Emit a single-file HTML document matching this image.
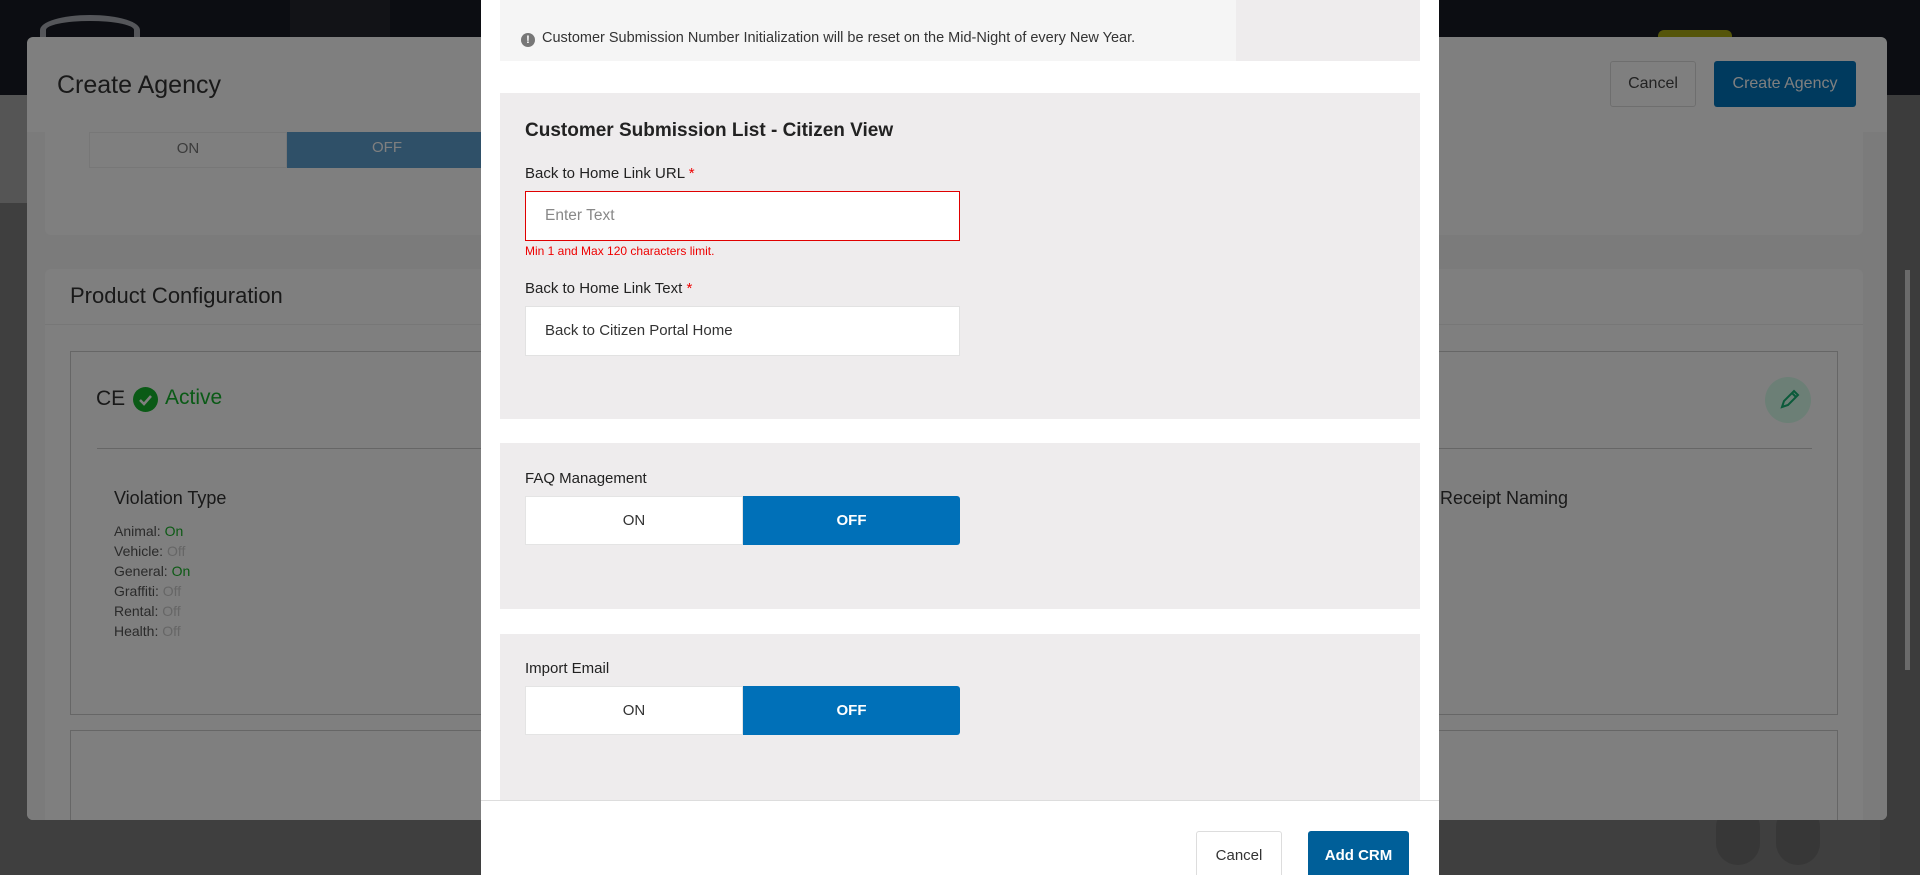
<!DOCTYPE html>
<html><head><meta charset="utf-8"><style>
*{box-sizing:border-box;margin:0;padding:0}
html,body{width:1920px;height:875px;overflow:hidden;background:#7e7e7e}
body{position:relative;font-family:"Liberation Sans",sans-serif;}
.a{position:absolute}
.t{position:absolute;white-space:nowrap}
</style></head><body>
<!-- background page (light, then overlaid) -->
<div class="a" style="left:0;top:0;width:1920px;height:95px;background:#181a24"></div>
<div class="a" style="left:290px;top:0;width:100px;height:95px;background:#24262e"></div>
<div class="a" style="left:0;top:95px;width:1920px;height:108px;background:#aaa"></div>
<div class="a" style="left:1658px;top:30px;width:74px;height:10px;background:#aaaa14;border-radius:6px 6px 0 0"></div>
<div class="a" style="left:40px;top:15px;width:100px;height:30px;border:6px solid #aaacb4;border-radius:50% 50% 0 0;border-bottom:none"></div>
<div class="a" style="left:1880px;top:95px;width:40px;height:780px;background:#787878"></div>
<div class="a" style="left:1905px;top:270px;width:5px;height:400px;background:#d6d6d6"></div>
<div class="a" style="left:1716px;top:805px;width:44px;height:60px;border-radius:22px;background:#6e6e6e"></div>
<div class="a" style="left:1776px;top:805px;width:44px;height:60px;border-radius:22px;background:#6e6e6e"></div>
<!-- create agency dialog -->
<div class="a" style="left:27px;top:37px;width:1860px;height:783px;background:#fff;border-radius:6px;overflow:hidden">
  <div class="a" style="left:0;top:95px;width:1860px;height:700px;background:#f6f6f6"></div>
  <div class="t" style="left:30px;top:34px;font-size:25px;color:#333">Create Agency</div>
  <div class="a" style="left:1583px;top:24px;width:86px;height:46px;border:1px solid #ddd;border-radius:3px;color:#444;font-size:16px;text-align:center;line-height:44px">Cancel</div>
  <div class="a" style="left:1687px;top:24px;width:142px;height:46px;background:#0074bc;border-radius:3px;color:#fff;font-size:16px;text-align:center;line-height:46px">Create Agency</div>
  <div class="a" style="left:18px;top:95px;width:1818px;height:103px;background:#fff;border-radius:0 0 6px 6px"></div>
  <div class="a" style="left:62px;top:95px;width:198px;height:36px;border:1px solid #eee;background:#fff;color:#777;font-size:15px;text-align:center;line-height:32px">ON</div>
  <div class="a" style="left:260px;top:95px;width:200px;height:36px;background:#5ea0d0;color:#fff;font-size:15px;text-align:center;line-height:32px">OFF</div>
  <div class="a" style="left:18px;top:232px;width:1818px;height:560px;background:#fff;border-radius:6px 6px 0 0"></div>
  <div class="a" style="left:18px;top:287px;width:1818px;height:1px;background:#eee"></div>
  <div class="t" style="left:43px;top:246px;font-size:22px;color:#333">Product Configuration</div>
  <div class="a" style="left:43px;top:314px;width:1768px;height:364px;border:1px solid #ccc"></div>
  <div class="t" style="left:69px;top:350px;font-size:21px;color:#333">CE</div>
  <div class="a" style="left:106px;top:350px;width:25px;height:25px;border-radius:50%;background:#15b42c"></div>
  <svg class="a" style="left:106px;top:350px" width="25" height="25"><path d="M7 13l4 4 7-8" stroke="#fff" stroke-width="2.5" fill="none"/></svg>
  <div class="t" style="left:138px;top:349px;font-size:21px;color:#15b42c">Active</div>
  <div class="a" style="left:70px;top:411px;width:1715px;height:1px;background:#ccc"></div>
  <div class="t" style="left:87px;top:451px;font-size:18px;color:#333">Violation Type</div>
  <div class="t" style="left:1413px;top:451px;font-size:18px;color:#333">Receipt Naming</div>
  <div class="t" style="left:87px;top:484px;font-size:14px;line-height:20px;color:#555">Animal: <span style="color:#1ab42a">On</span><br>Vehicle: <span style="color:#ccc">Off</span><br>General: <span style="color:#1ab42a">On</span><br>Graffiti: <span style="color:#ccc">Off</span><br>Rental: <span style="color:#ccc">Off</span><br>Health: <span style="color:#ccc">Off</span></div>
  <div class="a" style="left:1738px;top:340px;width:46px;height:46px;border-radius:50%;background:#d8ffec"></div>
  <svg class="a" style="left:1738px;top:340px" width="46" height="46"><path d="M17 30l2-6 10-10 4 4-10 10z M27 16l4 4" stroke="#16b474" stroke-width="2" fill="none"/></svg>
  <div class="a" style="left:43px;top:693px;width:1768px;height:100px;border:1px solid #ccc"></div>
</div>
<!-- overlay -->
<div class="a" style="left:0;top:0;width:1920px;height:875px;background:rgba(0,0,0,0.5)"></div>
<!-- CRM modal -->
<div class="a" style="left:481px;top:0;width:958px;height:875px;background:#fff">
  <div class="a" style="left:19px;top:0;width:736px;height:61px;background:#f5f5f5"></div>
  <div class="a" style="left:755px;top:0;width:184px;height:61px;background:#eeeced"></div>
  <div class="a" style="left:40px;top:33px;width:14px;height:14px;border-radius:50%;background:#777;color:#fff;font-size:11px;font-weight:bold;text-align:center;line-height:14px">!</div>
  <div class="t" style="left:61px;top:30px;font-size:14.5px;color:#333">Customer Submission Number Initialization will be reset on the Mid-Night of every New Year.</div>

  <div class="a" style="left:19px;top:93px;width:920px;height:326px;background:#eeeced"></div>
  <div class="t" style="left:44px;top:120px;font-size:19px;font-weight:bold;color:#222">Customer Submission List - Citizen View</div>
  <div class="t" style="left:44px;top:165px;font-size:15px;color:#222">Back to Home Link URL <span style="color:#e00">*</span></div>
  <div class="a" style="left:44px;top:191px;width:435px;height:50px;background:#fff;border:1.5px solid #e00000"></div>
  <div class="t" style="left:64px;top:207px;font-size:15.5px;color:#888">Enter Text</div>
  <div class="t" style="left:44px;top:244px;font-size:12px;color:#e00">Min 1 and Max 120 characters limit.</div>
  <div class="t" style="left:44px;top:280px;font-size:15px;color:#222">Back to Home Link Text <span style="color:#e00">*</span></div>
  <div class="a" style="left:44px;top:306px;width:435px;height:50px;background:#fff;border:1px solid #e2e2e2"></div>
  <div class="t" style="left:64px;top:322px;font-size:15px;color:#333">Back to Citizen Portal Home</div>

  <div class="a" style="left:19px;top:443px;width:920px;height:166px;background:#eeeced"></div>
  <div class="t" style="left:44px;top:470px;font-size:15px;color:#222">FAQ Management</div>
  <div class="a" style="left:44px;top:496px;width:218px;height:49px;background:#fff;border:1px solid #e4e4e4;font-size:15px;color:#333;text-align:center;line-height:47px">ON</div>
  <div class="a" style="left:262px;top:496px;width:217px;height:49px;background:#0070b8;border-radius:0 3px 3px 0;font-size:15px;font-weight:bold;color:#fff;text-align:center;line-height:49px">OFF</div>

  <div class="a" style="left:19px;top:634px;width:920px;height:166px;background:#eeeced"></div>
  <div class="t" style="left:44px;top:660px;font-size:15px;color:#222">Import Email</div>
  <div class="a" style="left:44px;top:686px;width:218px;height:49px;background:#fff;border:1px solid #e4e4e4;font-size:15px;color:#333;text-align:center;line-height:47px">ON</div>
  <div class="a" style="left:262px;top:686px;width:217px;height:49px;background:#0070b8;border-radius:0 3px 3px 0;font-size:15px;font-weight:bold;color:#fff;text-align:center;line-height:49px">OFF</div>

  <div class="a" style="left:0;top:800px;width:958px;height:75px;background:#fff;border-top:1px solid #ddd"></div>
  <div class="a" style="left:715px;top:831px;width:86px;height:50px;border:1px solid #ddd;border-radius:3px;font-size:15px;color:#333;text-align:center;line-height:48px">Cancel</div>
  <div class="a" style="left:827px;top:831px;width:101px;height:50px;background:#005f99;border-radius:3px;font-size:15px;font-weight:bold;color:#fff;text-align:center;line-height:50px">Add CRM</div>
</div>
</body></html>
